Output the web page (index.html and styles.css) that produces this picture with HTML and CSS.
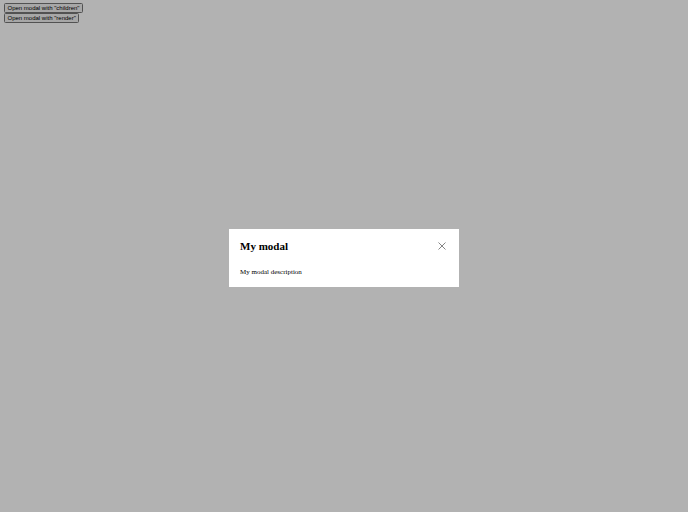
FILE: index.html
```html
<!DOCTYPE html>
<html lang="en">
<head>
    <meta charset="UTF-8">
    <meta name="viewport" content="width=device-width, initial-scale=1.0">
    <title>Modal</title>
    <link rel="stylesheet" href="styles.css">
</head>
<body>
    <div class="controls">
        <div class="control-row"><button class="open-button">Open modal with "children"</button></div>
        <div class="control-row"><button class="open-button">Open modal with "render"</button></div>
    </div>

    <div class="backdrop">
        <div class="modal" role="dialog">
            <div class="modal-header">
                <h2 class="modal-title">My modal</h2>
                <button class="close-button" aria-label="Close">
                    <svg width="8" height="8" viewBox="0 0 8 8">
                        <path d="M0.5 0.5 L7.5 7.5 M7.5 0.5 L0.5 7.5" stroke="#666" stroke-width="0.8" fill="none"/>
                    </svg>
                </button>
            </div>
            <p class="modal-description">My modal description</p>
        </div>
    </div>
</body>
</html>
```

FILE: styles.css
```css
body {
    font-family: "Liberation Serif", serif;
    margin: 3px 4px;
    background: #fff;
}

.control-row {
    display: flex;
}

.open-button {
    font-family: "Liberation Sans", Arial, sans-serif;
    font-size: 6px;
    padding: 0.5px 2.5px;
    border: 1px solid #767676;
    border-radius: 1.5px;
    background-color: #efefef;
    color: #000;
    line-height: 7.5px;
    height: 10px;
}

.backdrop {
    position: fixed;
    inset: 0;
    background: rgba(0, 0, 0, 0.3);
    display: flex;
    align-items: center;
    justify-content: center;
}

.modal {
    background: #fff;
    width: 230px;
    box-sizing: border-box;
    padding: 11px;
    margin-top: 3px;
}

.modal-header {
    display: flex;
    align-items: center;
    justify-content: space-between;
}

.modal-title {
    font-size: 11px;
    font-weight: bold;
    margin: 0;
}

.close-button {
    background: none;
    border: none;
    padding: 0;
    margin-right: 2px;
    width: 8px;
    height: 8px;
    display: flex;
}

.modal-description {
    font-size: 7px;
    margin: 16px 0 0;
}
```
